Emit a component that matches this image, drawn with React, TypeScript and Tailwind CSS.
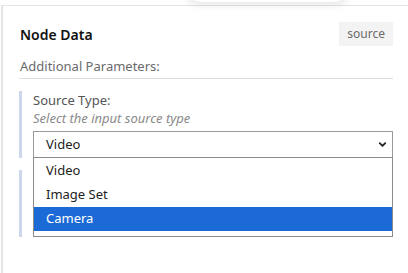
import { ChevronDown } from 'lucide-react';

const font = { fontFamily: '"Noto Sans", "Open Sans", sans-serif' };

function Field({ label, hint, value }: { label?: string; hint?: string; value?: string }) {
  return (
    <div className="border-l-[3px] border-[#cdd7ec] pl-[11px] flex flex-col">
      <div className="h-[18px] text-[13px] leading-[18px] text-[#555]">{label}</div>
      <div className="h-[18px] text-[13px] leading-[18px] italic text-[#8a8a8a]">{hint}</div>
      <div className="mt-[4px] h-[27px] border border-[#9a9a9a] flex items-center justify-between pl-[12px] pr-[4px] text-[13px] text-[#222]">
        <span>{value}</span>
        <ChevronDown size={11} strokeWidth={4} className="text-[#222]" />
      </div>
    </div>
  );
}

export default function App() {
  return (
    <div className="relative w-[408px] h-[273px] bg-white overflow-hidden" style={font}>
      {/* shadow from the floating bar above */}
      <div className="absolute left-[185px] top-[-30px] w-[165px] h-[32px] rounded-full bg-white shadow-[0_2px_8px_rgba(0,0,0,0.12)]" />

      <div className="mt-[5px] ml-[1px] h-[268px] border-t border-l-2 border-[#e3e3e3] pl-[16px] pr-[15px] pt-[16px]">
        {/* Header */}
        <div className="flex items-center justify-between h-[24px] pl-[1px]">
          <h2 className="text-[14px] font-semibold text-[#111]">Node Data</h2>
          <span className="bg-[#f3f3f3] px-[8px] h-[24px] flex items-center text-[12px] text-[#6a6a6a]">source</span>
        </div>

        <div className="mt-[11px] pl-[1px] pb-[3px] border-b border-[#dedede] text-[13px] leading-[18px] text-[#6a6a6a]">
          Additional Parameters:
        </div>

        <div className="mt-[12px] flex flex-col gap-[12px] relative">
          <Field label="Source Type:" hint="Select the input source type" value="Video" />
          <Field />

          {/* Open select options popup */}
          <ul className="absolute left-[14px] top-[66px] w-[360px] h-[80px] pt-[1px] bg-white border border-[#8c8c8c] text-[13px] text-[#222]">
            <li className="h-[24px] flex items-center pl-[12px]">Video</li>
            <li className="h-[24px] flex items-center pl-[12px]">Image Set</li>
            <li className="h-[24px] flex items-center pl-[12px] bg-[#1b6ad5] text-white">Camera</li>
          </ul>
        </div>
      </div>
    </div>
  );
}
